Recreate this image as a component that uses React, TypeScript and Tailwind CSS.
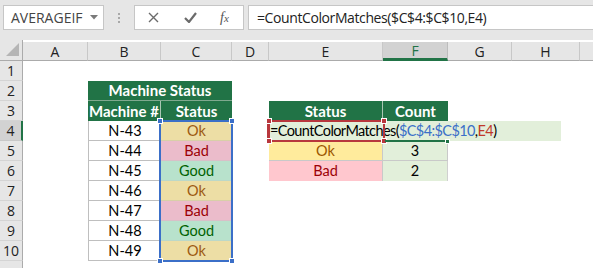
import React from "react";

type Cell = { text?: string; cls?: string; span?: number };

const HEAD = "bg-[#217346] text-white font-bold text-[15px]";
const B_BODY = "bg-white border-l border-b border-[#bfbfbf]";
const OK1 = "bg-[#eddea5] text-[#9c5a12] border-b border-[#d8cfa8]";
const BAD1 = "bg-[#ebbccb] text-[#9c0006] border-b border-[#d8c0c8]";
const GOOD1 = "bg-[#b8e2cc] text-[#006100] border-b border-[#bcd8c8]";

const colLetters = ["A", "B", "C", "D", "E", "F", "G", "H"];

const sheet: Record<number, Record<string, Cell>> = {
  2: { B: { text: "Machine Status", cls: HEAD + " border-b border-[#7fa98f]", span: 2 } },
  3: {
    B: { text: "Machine #", cls: HEAD + " border-r border-[#a9c6b3]" },
    C: { text: "Status", cls: HEAD },
    E: { text: "Status", cls: HEAD + " border-r border-[#a9c6b3]" },
    F: { text: "Count", cls: HEAD },
  },
  4: {
    B: { text: "N-43", cls: B_BODY },
    C: { text: "Ok", cls: OK1 },
    E: { cls: "bg-[#e2efda]" },
    F: { cls: "bg-[#e2efda]" },
  },
  5: {
    B: { text: "N-44", cls: B_BODY },
    C: { text: "Bad", cls: BAD1 },
    E: { text: "Ok", cls: "bg-[#ffeb9c] text-[#9c5700] border-b border-r border-[#c9c9c9]" },
    F: { text: "3", cls: "bg-[#e2efda] border-b border-r border-[#c9c9c9]" },
  },
  6: {
    B: { text: "N-45", cls: B_BODY },
    C: { text: "Good", cls: GOOD1 },
    E: { text: "Bad", cls: "bg-[#ffc7ce] text-[#9c0006] border-r border-[#c9c9c9]" },
    F: { text: "2", cls: "bg-[#e2efda] border-r border-[#d0d0d0]" },
  },
  7: { B: { text: "N-46", cls: B_BODY }, C: { text: "Ok", cls: OK1 } },
  8: { B: { text: "N-47", cls: B_BODY }, C: { text: "Bad", cls: BAD1 } },
  9: { B: { text: "N-48", cls: B_BODY }, C: { text: "Good", cls: GOOD1 } },
  10: { B: { text: "N-49", cls: B_BODY }, C: { text: "Ok", cls: OK1 } },
};

function Handle({ className }: { className: string }) {
  return <div className={"absolute h-[6px] w-[6px] border border-white " + className} />;
}

function FormulaBar() {
  return (
    <div className="flex h-[40px] items-start bg-[#e6e6e6] pt-[5px] font-['Open_Sans',sans-serif]">
      {/* name box */}
      <div className="ml-[3px] flex h-[25px] w-[101px] items-center justify-between border border-[#c6c6c6] bg-white pl-[7px] pr-[5px]">
        <span className="text-[14px] text-[#444]">AVERAGEIF</span>
        <svg width="8" height="5" viewBox="0 0 8 5">
          <path d="M0 0h8L4 4.5z" fill="#7a7a7a" />
        </svg>
      </div>
      {/* grip dots */}
      <div className="ml-[14px] flex h-[25px] flex-col items-center justify-center gap-[2px]">
        <span className="h-[2px] w-[2px] bg-[#a8a8a8]" />
        <span className="h-[2px] w-[2px] bg-[#a8a8a8]" />
        <span className="h-[2px] w-[2px] bg-[#a8a8a8]" />
      </div>
      {/* cancel / enter / fx */}
      <div className="ml-[14px] flex h-[25px] w-[110px] items-center border border-[#c6c6c6] bg-white">
        <svg className="ml-[13px]" width="11" height="11" viewBox="0 0 11 11">
          <path d="M1 1l9 9M10 1l-9 9" stroke="#6b6b6b" strokeWidth="1.4" />
        </svg>
        <svg className="ml-[25px]" width="13" height="11" viewBox="0 0 13 11">
          <path d="M1 6l4 4 7-9" stroke="#6b6b6b" strokeWidth="2.2" fill="none" />
        </svg>
        <span className="ml-[23px] font-['Liberation_Serif',serif] text-[14px] italic text-[#555]">
          f<span className="text-[11px]">x</span>
        </span>
      </div>
      {/* formula input */}
      <div className="ml-[4px] flex h-[25px] flex-1 items-center border border-r-0 border-[#c6c6c6] bg-white pl-[8px]">
        <span className="text-[14px] tracking-[-0.4px] text-[#222]">=CountColorMatches($C$4:$C$10,E4)</span>
      </div>
    </div>
  );
}

export default function App() {
  const rowNums = [1, 2, 3, 4, 5, 6, 7, 8, 9, 10, 11];
  return (
    <div className="h-[268px] w-[593px] overflow-hidden bg-white">
      <FormulaBar />
      <div className="relative grid grid-cols-[23px_65px_73px_71px_37px_114px_65px_64px_68px_1fr] grid-rows-[21px_repeat(11,20px)] font-['Lato',sans-serif] text-[14.5px] text-black">
        {/* header row */}
        <div className="relative border-b border-r border-[#ababab] bg-[#e6e6e6]">
          <svg className="absolute bottom-[4px] right-[3px]" width="13" height="13" viewBox="0 0 13 13">
            <path d="M13 0v13H0z" fill="#b5b5b5" />
          </svg>
        </div>
        {colLetters.map((l) => (
          <div
            key={l}
            className={
              l === "F"
                ? "mt-[2px] flex items-center justify-center border-b-[3px] border-r border-b-[#217346] border-r-[#bdbdbd] bg-[#d2d2d2] font-['Open_Sans',sans-serif] text-[14px] text-[#217346]"
                : "mt-[2px] flex items-center justify-center border-b border-r border-b-[#ababab] border-r-[#c8c8c8] bg-[#e6e6e6] font-['Open_Sans',sans-serif] text-[14px] text-[#222]"
            }
          >
            {l}
          </div>
        ))}
        <div className="mt-[2px] border-b border-[#ababab] bg-[#e6e6e6]" />

        {rowNums.map((r) => {
          const row = sheet[r] || {};
          const out: React.ReactNode[] = [];
          out.push(
            <div
              key={r + "h"}
              className={
                r === 4
                  ? "flex items-center justify-center border-b border-r-2 border-b-[#c8c8c8] border-r-[#217346] bg-[#d2d2d2] font-['Open_Sans',sans-serif] text-[14px] text-[#222]"
                  : "flex items-center justify-center border-b border-r border-b-[#d4d4d4] border-r-[#ababab] bg-[#e6e6e6] font-['Open_Sans',sans-serif] text-[14px] text-[#222]"
              }
            >
              {r < 11 ? r : null}
            </div>
          );
          let skip = 0;
          colLetters.forEach((l) => {
            if (skip > 0) {
              skip--;
              return;
            }
            const c = row[l];
            if (c && c.span) skip = c.span - 1;
            out.push(
              <div
                key={r + l}
                className={
                  "flex items-center justify-center whitespace-nowrap " +
                  (c?.span === 2 ? "col-span-2 " : "") +
                  (c?.cls || "")
                }
              >
                {c?.text}
              </div>
            );
          });
          out.push(<div key={r + "x"} />);
          return out;
        })}

        {/* formula reference: C4:C10 */}
        <div className="absolute left-[159px] top-[80px] h-[142px] w-[74px] border-2 border-[#3b6fc8]" />
        <Handle className="left-[157px] top-[78px] bg-[#3b6fc8]" />
        <Handle className="left-[229px] top-[78px] bg-[#3b6fc8]" />
        <Handle className="left-[157px] top-[218px] bg-[#3b6fc8]" />
        <Handle className="left-[229px] top-[218px] bg-[#3b6fc8]" />

        {/* in-cell edit of F4 */}
        <div className="absolute left-[268px] top-[81px] flex h-[20px] w-[293px] items-center whitespace-nowrap bg-[#e2efda] pl-[2px] tracking-[-0.6px]">
          =CountColorMatches(<span className="text-[#3b6fc8]">$C$4:$C$10</span>,<span className="text-[#c0392b]">E4</span>)
        </div>
        <div className="absolute left-[267px] top-[80px] h-[22px] w-[118px] border-2 border-l-[3px] border-[#b8373d]" />
        <Handle className="left-[266px] top-[78px] bg-[#b8373d]" />
        <Handle className="left-[381px] top-[78px] bg-[#b8373d]" />
        <Handle className="left-[266px] top-[98px] bg-[#b8373d]" />
        <Handle className="left-[381px] top-[98px] bg-[#b8373d]" />

        {/* active cell F4 edge */}
        <div className="absolute left-[385px] top-[100px] h-[2px] w-[63px] bg-[#217346]" />
        <div className="absolute left-[445px] top-[99px] h-[5px] w-[5px] border border-white bg-[#217346]" />
      </div>
    </div>
  );
}
